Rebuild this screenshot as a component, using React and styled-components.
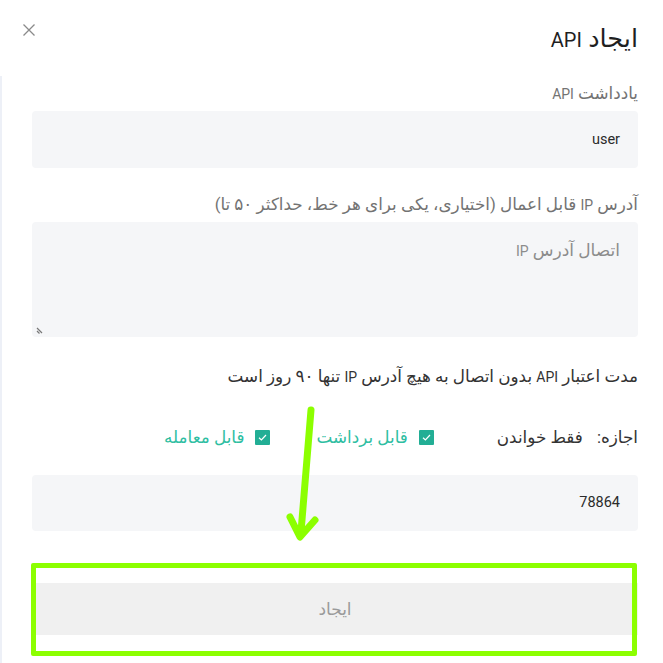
import React from "react";
import styled, { createGlobalStyle } from "styled-components";

const Global = createGlobalStyle`
  html, body { margin: 0; padding: 0; background: #fff; }
  body { font-family: Roboto, "DejaVu Sans", sans-serif; }
  * { box-sizing: border-box; }
`;

const Modal = styled.div`
  position: relative;
  width: 663px;
  height: 663px;
  background: #fff;
  direction: rtl;
  overflow: hidden;
`;

const Header = styled.div`
  display: flex;
  align-items: center;
  justify-content: space-between;
  height: 76px;
  padding: 0 25px 0 22px;
`;

const Title = styled.h2`
  margin: 0;
  font-size: 25.5px;
  font-weight: 400;
  color: #1f1f1f;
  line-height: 28px;
  margin-top: 0;
`;

const Lat = styled.span`
  font-family: Roboto, sans-serif;
  font-size: ${(p) => p.$size || 14}px;
  line-height: 1;
`;

const Close = styled.button`
  border: 0;
  background: none;
  padding: 0;
  width: 14px;
  height: 14px;
  margin-top: -16px;
  display: flex;
  color: #8a8a8a;
`;

const Body = styled.div`
  padding: 7px 25px 0 32px;
  box-shadow: inset 2px 0 0 #edf0f7;
  height: 587px;
`;

const Label = styled.div`
  font-size: 16.8px;
  line-height: 20px;
  height: 20px;
  color: #737373;
  margin-top: ${(p) => p.$mt || 0}px;
  margin-bottom: 8px;
  white-space: nowrap;
`;

const Field = styled.div`
  height: ${(p) => p.$h || 57}px;
  background: #f5f6f8;
  border-radius: 4px;
  padding: ${(p) => (p.$area ? "18px 18px" : "0 18px")};
  display: flex;
  align-items: ${(p) => (p.$area ? "flex-start" : "center")};
  font-size: ${(p) => (p.$placeholder ? 17 : 14.5)}px;
  line-height: 20px;
  color: ${(p) => (p.$placeholder ? "#8c8c8c" : "#2b2b2b")};
  position: relative;
  margin-top: ${(p) => p.$mt || 0}px;
`;

const Grip = styled.svg`
  position: absolute;
  left: 4px;
  bottom: 3px;
`;

const Note = styled.div`
  margin-top: 29px;
  font-size: 16.8px;
  line-height: 20px;
  height: 20px;
  color: #333;
  white-space: nowrap;
`;

const PermRow = styled.div`
  display: flex;
  align-items: center;
  margin-top: 41px;
  height: 20px;
  font-size: 16.8px;
  color: #333;
  white-space: nowrap;
`;

const PermKey = styled.span`
  margin-left: 14px;
`;

const Check = styled.label`
  display: flex;
  align-items: center;
  gap: 11px;
  color: #2fbea2;
  margin-right: ${(p) => p.$mr}px;
`;

const Box = styled.span`
  width: 15px;
  height: 15px;
  background: #22ae95;
  display: flex;
  align-items: center;
  justify-content: center;
  border-radius: 1px;
`;

const Submit = styled.button`
  display: block;
  width: 100%;
  height: 52px;
  margin-top: 52px;
  border: 0;
  background: #f0f0f0;
  color: #9a9a9a;
  font-family: inherit;
  font-size: 17px;
`;

const Highlight = styled.div`
  position: absolute;
  left: 31px;
  top: 563px;
  width: 606px;
  height: 93px;
  border: 5px solid #8cff00;
  border-radius: 2px;
  pointer-events: none;
`;

const Arrow = styled.svg`
  position: absolute;
  left: 0;
  top: 0;
  pointer-events: none;
`;

const Tick = () => (
  <svg width="11" height="11" viewBox="0 0 11 11">
    <path d="M2 5.8 L4.4 8 L9 3" fill="none" stroke="#fff" strokeWidth="1.2" />
  </svg>
);

export default function App() {
  return (
    <>
      <Global />
      <Modal dir="rtl">
        <Header>
          <Title>
            ایجاد <Lat $size={20}>API</Lat>
          </Title>
          <Close aria-label="close">
            <svg width="14" height="14" viewBox="0 0 14 14">
              <path d="M1.5 1.5 L12.5 12.5 M12.5 1.5 L1.5 12.5" stroke="#8a8a8a" strokeWidth="1.3" />
            </svg>
          </Close>
        </Header>
        <Body>
          <Label>
            یادداشت <Lat>API</Lat>
          </Label>
          <Field>user</Field>
          <Label $mt={26}>
            آدرس <Lat>IP</Lat> قابل اعمال (اختیاری، یکی برای هر خط، حداکثر ۵۰ تا)
          </Label>
          <Field $h={115} $area $placeholder>
            <span>
              اتصال آدرس <Lat>IP</Lat>
            </span>
            <Grip width="10" height="10" viewBox="0 0 10 10">
              <path d="M1 4 L6 9 M1 7 L3.5 9.5" stroke="#777" strokeWidth="1.2" />
            </Grip>
          </Field>
          <Note>
            مدت اعتبار <Lat>API</Lat> بدون اتصال به هیچ آدرس <Lat>IP</Lat> تنها ۹۰ روز است
          </Note>
          <PermRow>
            <PermKey>اجازه:</PermKey>
            <span>فقط خواندن</span>
            <Check $mr={63}>
              <Box><Tick /></Box>
              قابل برداشت
            </Check>
            <Check $mr={46}>
              <Box><Tick /></Box>
              قابل معامله
            </Check>
          </PermRow>
          <Field $mt={28} $h={56}>78864</Field>
          <Submit>ایجاد</Submit>
        </Body>
        <Highlight />
        <Arrow width="663" height="663" viewBox="0 0 663 663">
          <path
            d="M311 410 L301 532 M290 517 L300 537 L315 520"
            fill="none"
            stroke="#8cff00"
            strokeWidth="7"
            strokeLinecap="round"
            strokeLinejoin="round"
          />
        </Arrow>
      </Modal>
    </>
  );
}
